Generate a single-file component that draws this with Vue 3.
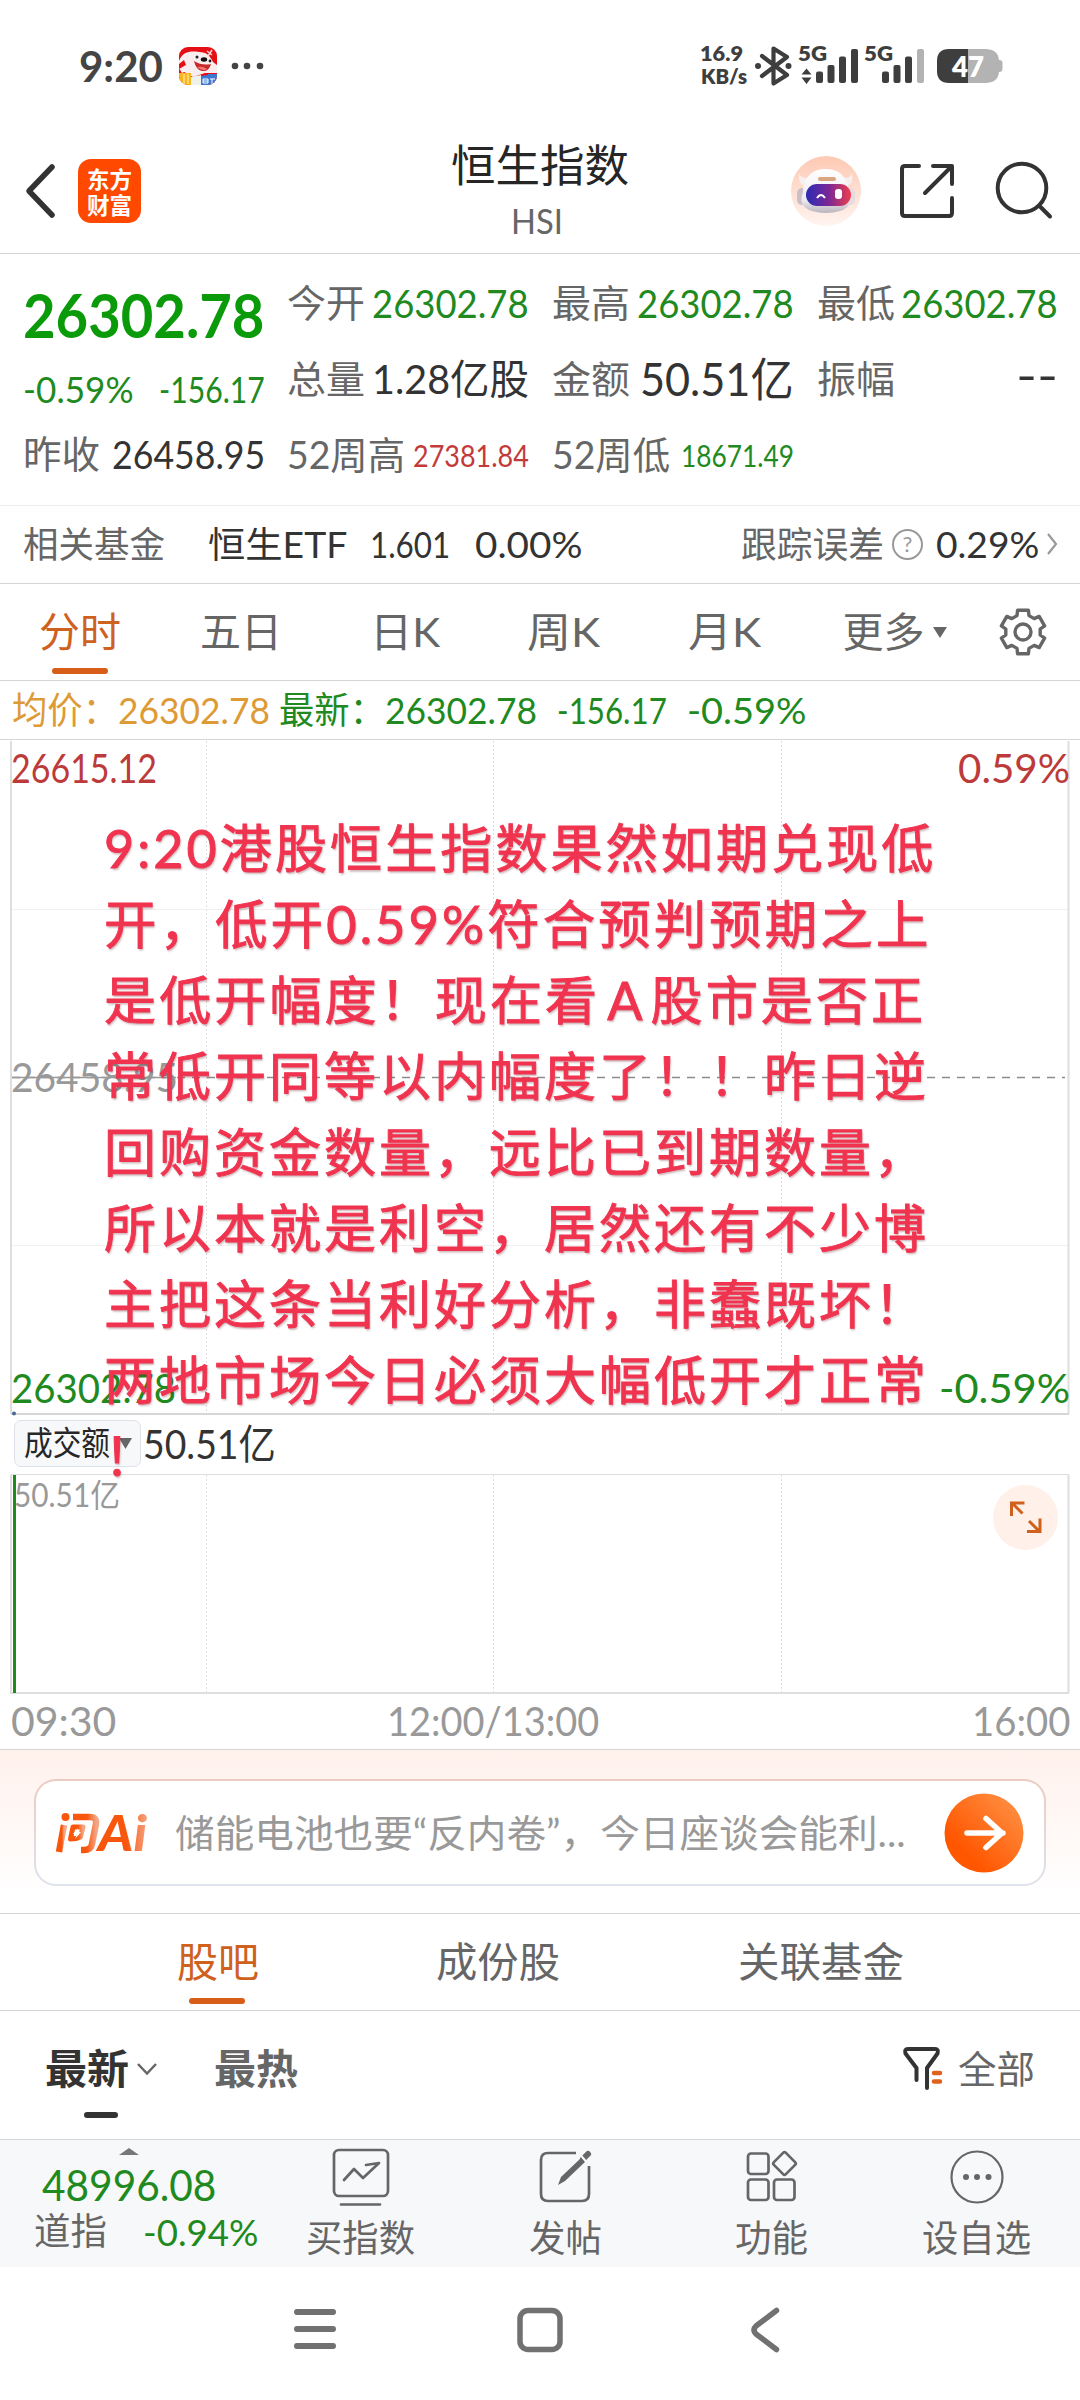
<script setup>
// Scales a text run horizontally so that it fills the given width in pixels.
const vFit = {
  mounted(el, { value }) {
    const natural = el.offsetWidth
    if (!natural) return
    el.style.transform = `scaleX(${value / natural})`
    el.style.marginRight = `${value - natural}px`
  },
}

const columns = [
  [
    { label: '今开', value: '26302.78', lw: 78, vw: 157, cls: 'green s39' },
    { label: '总量', value: '1.28亿股', lw: 78, vw: 157, cls: 'ink s41 han' },
    { label: '52周高', value: '27381.84', lw: 118, vw: 116, cls: 'red s30' },
  ],
  [
    { label: '最高', value: '26302.78', lw: 78, vw: 157, cls: 'green s39' },
    { label: '金额', value: '50.51亿', lw: 78, vw: 154, cls: 'ink s46 han' },
    { label: '52周低', value: '18671.49', lw: 118, vw: 113, cls: 'green s30' },
  ],
  [
    { label: '最低', value: '26302.78', lw: 78, vw: 157, cls: 'green s39' },
    { label: '振幅', value: '--', lw: 78, vw: 42, cls: 'ink s46 dash' },
  ],
]

const note = [
  { t: ['9:20港股恒生指数果然如期兑现低'], w: 832 },
  { t: ['开，低开0.59%符合预判预期之上'], w: 827 },
  { t: ['是低开幅度！现在看', 'A', '股市是否正'], w: 822 },
  { t: ['常低开同等以内幅度了！！昨日逆'], w: 825 },
  { t: ['回购资金数量，远比已到期数量，'], w: 825 },
  { t: ['所以本就是利空，居然还有不少博'], w: 825 },
  { t: ['主把这条当利好分析，非蠢既坏！'], w: 825 },
  { t: ['两地市场今日必须大幅低开才正常'], w: 825 },
  { t: ['！'], w: 55 },
]

const gear = Array.from({ length: 6 }, (_, i) => i * 60)
  .flatMap((a) => [[a - 20, 17.5], [a - 14, 22.5], [a + 14, 22.5], [a + 20, 17.5]])
  .map(([a, r]) => {
    const rad = (a * Math.PI) / 180
    return `${(25 + r * Math.sin(rad)).toFixed(1)},${(25 - r * Math.cos(rad)).toFixed(1)}`
  })
  .join(' ')
</script>

<template>
  <div class="screen">
    <header class="status">
      <span v-fit="84" class="clock">9:20</span>
      <svg class="dog" width="38" height="38" viewBox="0 0 38 38">
        <defs><clipPath id="dogClip"><rect width="38" height="38" rx="9" /></clipPath></defs>
        <g clip-path="url(#dogClip)">
          <rect width="38" height="38" fill="#e60f16" />
          <path d="M0 14C4 4 12 4 20 5c8 0 11 4 14 10l4 3v8H26L14 30 0 22l7-4-2-5-5 4z" fill="#f8eeee" />
          <path d="M28 4l5 4M33 3l-4 6" stroke="#ffd5d0" stroke-width="1.5" />
          <path d="M1 23l6 1-4 2z" fill="#fff" />
          <circle cx="18" cy="10" r="1.5" fill="#222" /><circle cx="31" cy="14" r="1.4" fill="#222" />
          <ellipse cx="25" cy="12.5" rx="3.2" ry="2.2" fill="#111" />
          <path d="M15 14q8 5 17 3-2 8-9 7-6-1-8-10z" fill="#c82a2c" />
          <path d="M18 20q6-1 10 2-4 3-10-2z" fill="#f4777a" />
          <path d="M0 26h12v12H0z" fill="#f8b51c" /><path d="M5 27v10M9 27v10" stroke="#ffe08a" stroke-width="1.5" />
          <path d="M12 30l10-2v10H12z" fill="#eef2ea" />
          <path d="M22 29l7-1v-1h9v11H22z" fill="#3c78d2" />
          <path d="M24 32h5v4h-5zM31 32h5M33 32v5M24 34h5" stroke="#fff" fill="none" />
        </g>
      </svg>
      <svg class="more" width="34" height="8" viewBox="0 0 34 8"><g fill="#444"><circle cx="4" cy="4" r="3.3" /><circle cx="16" cy="4" r="3.3" /><circle cx="29" cy="4" r="3.3" /></g></svg>
      <svg class="sys" width="310" height="50" viewBox="695 40 310 50" fill="#3e3e3e">
        <g font-weight="800" font-size="21.5">
          <text x="700" y="59.5" textLength="43" lengthAdjust="spacingAndGlyphs">16.9</text>
          <text x="701" y="82.5" font-size="20" textLength="46" lengthAdjust="spacingAndGlyphs">KB/s</text>
          <text x="798" y="59.5" textLength="29" lengthAdjust="spacingAndGlyphs">5G</text>
          <text x="864" y="59.5" textLength="29" lengthAdjust="spacingAndGlyphs">5G</text>
        </g>
        <path d="M762 55l25 19-13.500 8.500V47.500L787 56l-25 19" fill="none" stroke="#3e3e3e" stroke-width="4.200" stroke-linejoin="round" stroke-linecap="round" />
        <circle cx="758" cy="65" r="3" /><circle cx="788.500" cy="65" r="3" />
        <path d="M806.500 67.500l5 6h-10zM806.500 83l5-6.500h-10z" />
        <rect x="816" y="70.500" width="7" height="11.500" rx="2" /><rect x="827.500" y="64" width="7" height="18" rx="2" /><rect x="839" y="55.500" width="7" height="26.500" rx="2" /><rect x="851" y="48" width="7" height="34" rx="2" />
        <rect x="882" y="70.500" width="7" height="11.500" rx="2" /><rect x="893.500" y="64" width="7" height="18" rx="2" /><rect x="905" y="55.500" width="7" height="26.500" rx="2" /><rect x="917" y="48" width="7" height="34" rx="2" fill="#b3b3b3" />
        <path d="M968 48h17q13 0 14 11 3.500 0 3.500 3v6q0 3-3.500 3-1 11-14 11h-17z" fill="#b3b3b3" />
        <path d="M968 48h-19q-12 0-12 12v10q0 12 12 12h19z" />
        <text x="952" y="75.500" font-size="28" font-weight="800" fill="#fff" textLength="32" lengthAdjust="spacingAndGlyphs">47</text>
      </svg>
    </header>

    <nav class="title-bar">
      <svg class="back" width="34" height="56" viewBox="0 0 34 56"><path d="M29 4L6 28l23 24" fill="none" stroke="#333" stroke-width="5.500" stroke-linecap="round" stroke-linejoin="round" /></svg>
      <div class="logo"><span>东方</span><span>财富</span></div>
      <div class="title"><span v-fit="178" class="name">恒生指数</span><span v-fit="52" class="code">HSI</span></div>
      <svg class="robot" width="70" height="70" viewBox="0 0 70 70">
        <defs>
          <linearGradient id="halo" x2="0" y2="1"><stop stop-color="#fdc9b3" /><stop offset="1" stop-color="#fff4f0" /></linearGradient>
          <linearGradient id="visor"><stop stop-color="#2b2bb4" /><stop offset=".5" stop-color="#7a2796" /><stop offset="1" stop-color="#ee3f4e" /></linearGradient>
          <linearGradient id="helmet" x2="0" y2="1"><stop stop-color="#fff" /><stop offset=".7" stop-color="#eeeaf0" /><stop offset="1" stop-color="#b9b4bd" /></linearGradient>
        </defs>
        <circle cx="35" cy="35" r="35" fill="url(#halo)" />
        <path d="M8 17q3 7 10 4l-5 9q-6-2-5-13zM61 17q-3 7-9 4l4 9q7-2 5-13z" fill="#f7eeee" />
        <rect x="6" y="32" width="10" height="17" rx="5" fill="#c9bfc6" /><rect x="54" y="32" width="10" height="17" rx="5" fill="#e5dce1" />
        <path d="M12 36C13 20 22 13 35 13s22 8 23 23q8 20-23 21Q4 56 12 36z" fill="url(#helmet)" />
        <rect x="27" y="21" width="18" height="4" rx="2" fill="#dba57f" />
        <rect x="15" y="28" width="45" height="22" rx="11" fill="url(#visor)" />
        <path d="M26 42q4-6 8 0" fill="none" stroke="#fff" stroke-width="2" /><rect x="44" y="33" width="7" height="10" rx="3" fill="#fff" />
      </svg>
      <svg class="share" width="58" height="58" viewBox="0 0 58 58" fill="none" stroke="#333" stroke-width="4" stroke-linecap="round" stroke-linejoin="round"><path d="M21 4H7Q4 4 4 7v44q0 3 3 3h44q3 0 3-3V36M35 4h19v18M52 6L27 31" /></svg>
      <svg class="search" width="60" height="60" viewBox="0 0 60 60" fill="none" stroke="#333" stroke-width="4" stroke-linecap="round"><circle cx="27" cy="27" r="24.300" /><path d="M44.500 45L55 55.500" /></svg>
    </nav>

    <section class="quote">
      <div class="main">
        <div class="price"><span v-fit="241" class="green">26302.78</span></div>
        <div class="change green"><span v-fit="111">-0.59%</span><span v-fit="106">-156.17</span></div>
        <div class="cell"><span v-fit="77" class="label">昨收</span><span v-fit="153" class="ink s38">26458.95</span></div>
      </div>
      <div v-for="(col, i) in columns" :key="i" class="col">
        <div v-for="c in col" :key="c.label" class="cell">
          <span v-fit="c.lw" class="label">{{ c.label }}</span><span v-fit="c.vw" :class="c.cls">{{ c.value }}</span>
        </div>
      </div>
    </section>

    <section class="fund">
      <span v-fit="142" class="label">相关基金</span>
      <span v-fit="139" class="etf">恒生ETF</span>
      <span v-fit="80" class="f1">1.601</span>
      <span v-fit="107" class="f2">0.00%</span>
      <span v-fit="143" class="label f3">跟踪误差</span>
      <svg width="33" height="33" viewBox="0 0 33 33"><circle cx="16.500" cy="16.500" r="14.500" fill="none" stroke="#999" stroke-width="2" /><text x="16.500" y="24" font-size="22" text-anchor="middle" fill="#999">?</text></svg>
      <span v-fit="103" class="f4">0.29%</span>
      <svg class="arr" width="12" height="24" viewBox="0 0 12 24"><path d="M2 2l8 10-8 10" fill="none" stroke="#999" stroke-width="2.200" /></svg>
    </section>

    <nav class="tabs">
      <span v-fit="82" class="active">分时</span>
      <span v-fit="82" class="t2">五日</span>
      <span v-fit="70" class="t3">日K</span>
      <span v-fit="73" class="t4">周K</span>
      <span v-fit="73" class="t5">月K</span>
      <span v-fit="82" class="t6">更多</span>
      <svg class="tri" width="14" height="11" viewBox="0 0 14 11"><path d="M0 0h14L7 11z" fill="#666" /></svg>
      <svg class="gear" width="50" height="50" viewBox="0 0 50 50" fill="none" stroke="#666" stroke-width="3.400"><polygon :points="gear" stroke-linejoin="round" /><circle cx="25" cy="25" r="8" /></svg>
      <i class="bar"></i>
    </nav>

    <section class="info">
      <span v-fit="106" class="amber han">均价：</span><span v-fit="152" class="amber">26302.78</span>
      <span v-fit="106" class="green i3 han">最新：</span><span v-fit="152" class="green">26302.78</span>
      <span v-fit="110" class="green i5">-156.17</span><span v-fit="120" class="green i6">-0.59%</span>
    </section>

    <section class="chart">
      <svg width="1080" height="676" viewBox="0 739 1080 676">
        <g stroke="#dedede" fill="none">
          <path d="M206.500 740v673M493.500 740v673M781.500 740v673" stroke-dasharray="2 2" />
          <path d="M12 908.500h1056M12 1244.500h1056" stroke="#f0f0f0" />
          <path d="M11 740v673M1068.500 740v673" stroke-width="2" />
        </g>
        <path d="M12 1076.500h1053" stroke="#8c8c8c" stroke-width="1.500" stroke-dasharray="8 7" />
        <path d="M11 1413h1058" stroke="#d6d6d6" stroke-width="2" /><circle cx="14" cy="1412.500" r="2" fill="#4a6a96" />
        <g font-size="41">
          <text x="11" y="781.500" fill="#bd3a3a" textLength="146" lengthAdjust="spacingAndGlyphs">26615.12</text>
          <text x="958" y="781.500" fill="#bd3a3a" textLength="112" lengthAdjust="spacingAndGlyphs">0.59%</text>
          <text x="11" y="1091" fill="#999" textLength="167" lengthAdjust="spacingAndGlyphs">26458.95</text>
          <text x="11" y="1401.500" fill="#208a20" textLength="165" lengthAdjust="spacingAndGlyphs">26302.78</text>
          <text x="939" y="1401.500" fill="#208a20" textLength="131" lengthAdjust="spacingAndGlyphs">-0.59%</text>
        </g>
        <path d="M12 1076.500h164" stroke="#999" stroke-width="1.500" />
      </svg>
      <div class="note">
        <div v-for="(l, i) in note" :key="i"><span v-fit="l.w"><b v-for="(p, j) in l.t" :key="j" :class="{ letter: j === 1 }">{{ p }}</b></span></div>
      </div>
    </section>

    <section class="turnover">
      <div class="pill"><span v-fit="86">成交额</span><svg width="13" height="11" viewBox="0 0 13 11"><path d="M0 0h13L6.500 11z" fill="#666" /></svg></div>
      <span v-fit="133" class="amount">50.51亿</span>
    </section>

    <section class="volume">
      <svg width="1080" height="221" viewBox="0 1474 1080 221">
        <g stroke="#dedede" fill="none">
          <path d="M206.500 1475v218M493.500 1475v218M781.500 1475v218" stroke-dasharray="2 2" />
          <path d="M11 1474.500h1058" /><path d="M11 1475v218M1068.500 1475v218M10 1693h1059" stroke-width="2" />
        </g>
        <path d="M14.500 1475v218" stroke="#208a20" stroke-width="3" />
        <text x="14" y="1507" font-size="32" fill="#999" textLength="106" lengthAdjust="spacingAndGlyphs">50.51亿</text>
        <circle cx="1025.500" cy="1517.500" r="32.500" fill="#fff1e9" />
        <path d="M1022.500 1513.500l-11-11M1011.500 1516v-13h13M1029 1521l11 11M1027 1531.500h13v-13" fill="none" stroke="#d0601c" stroke-width="3" />
      </svg>
    </section>

    <div class="times"><span v-fit="105">09:30</span><span v-fit="212">12:00/13:00</span><span v-fit="98">16:00</span></div>

    <section class="ask">
      <div class="ask-box">
        <svg class="ask-logo" width="94" height="44" viewBox="0 0 94 44">
          <defs><linearGradient id="askFill"><stop offset=".6" stop-color="#f9560d" /><stop offset="1" stop-color="#f5a583" /></linearGradient></defs>
          <g fill="none" stroke="url(#askFill)" stroke-width="6.500" stroke-linejoin="round" stroke-linecap="butt">
            <path d="M9 14L4 41" /><path d="M18 6h17q7 0 6 7l-4 20q-1 6-8 6h-3" />
            <path d="M18 16h10l-2.500 10q-4 2-10 2z" stroke-width="5" />
          </g>
          <circle cx="10.500" cy="6" r="4" fill="#f9560d" /><path d="M23 17l-5 6h4l-2 5 6-7h-4z" fill="#fff" />
          <text x="43" y="39.500" font-size="49" font-style="italic" font-weight="900" fill="url(#askFill)" textLength="49" lengthAdjust="spacingAndGlyphs">Ai</text>
        </svg>
        <span v-fit="731" class="ph">储能电池也要“反内卷”，今日座谈会能利...</span>
        <svg class="go" width="80" height="80" viewBox="0 0 80 80">
          <defs><linearGradient id="goFill" x1=".25" y1=".75" x2=".85" y2=".15"><stop stop-color="#ff5600" /><stop offset="1" stop-color="#ff8a3c" /></linearGradient></defs>
          <circle cx="40" cy="40" r="39.500" fill="url(#goFill)" />
          <path d="M23 40h36M42 25.500L58 40 42 54.500" fill="none" stroke="#fff" stroke-width="5.500" stroke-linecap="round" stroke-linejoin="round" />
        </svg>
      </div>
    </section>

    <nav class="tabs lower">
      <span v-fit="82" class="active">股吧</span><span v-fit="124" class="l2">成份股</span><span v-fit="166" class="l3">关联基金</span>
      <i class="bar"></i>
    </nav>

    <section class="sort">
      <span v-fit="84" class="newest han">最新</span>
      <svg class="chev" width="22" height="14" viewBox="0 0 22 14"><path d="M2 2l9 9.500L20 2" fill="none" stroke="#666" stroke-width="2.500" /></svg>
      <span v-fit="84" class="hot han">最热</span>
      <svg class="funnel" width="42" height="46" viewBox="0 0 42 46" fill="none" stroke-linecap="round" stroke-linejoin="round"><path d="M14.500 34V22L3.500 7.500Q2 3 6 3h27q4 0 2.500 4.500L25 22v20" stroke="#333" stroke-width="4" /><path d="M32 27h6M32 35.500h6" stroke="#e0621f" stroke-width="4.500" /></svg>
      <span v-fit="77" class="all han">全部</span>
      <i class="bar"></i>
    </section>

    <footer class="dock">
      <div class="index">
        <svg width="20" height="7" viewBox="0 0 20 7"><path d="M0 7L10 0l10 7z" fill="#777" /></svg>
        <div class="ix green"><span v-fit="174">48996.08</span></div>
        <div class="ix2"><span v-fit="73" class="label">道指</span><span v-fit="116" class="green">-0.94%</span></div>
      </div>
      <div class="item">
        <svg width="60" height="60" viewBox="0 0 60 60" fill="none" stroke="#666" stroke-width="2.700" stroke-linecap="round" stroke-linejoin="round"><rect x="3" y="4" width="54" height="46" rx="5" /><path d="M10 58.500h39M13 34l10-11 9 9 16-15-13 2" /></svg>
        <span v-fit="109">买指数</span>
      </div>
      <div class="item">
        <svg width="60" height="60" viewBox="0 0 60 60" fill="none" stroke="#666" stroke-width="2.700"><path d="M40 7H12q-7 0-7 7v34q0 7 7 7h34q7 0 7-7V20" /><path d="M22 39l3-8 20-19 4 4-20 19z" fill="#666" stroke="none" /><path d="M47 13l5-5" stroke-width="6" stroke-linecap="round" /><path d="M44.500 9l6 7" stroke="#f7f8fa" stroke-width="2" /></svg>
        <span v-fit="73">发帖</span>
      </div>
      <div class="item">
        <svg width="60" height="60" viewBox="0 0 60 60" fill="none" stroke="#666" stroke-width="2.700"><rect x="7" y="7.500" width="20.500" height="20.500" rx="3" /><rect x="7" y="33.500" width="20.500" height="20.500" rx="3" /><rect x="33" y="33.500" width="20.500" height="20.500" rx="3" /><rect x="35" y="9" width="17" height="17" rx="2" transform="rotate(45 43.500 17.500)" /></svg>
        <span v-fit="73">功能</span>
      </div>
      <div class="item">
        <svg width="60" height="60" viewBox="0 0 60 60"><circle cx="30" cy="31" r="25.500" fill="none" stroke="#666" stroke-width="2.200" /><g fill="#666"><circle cx="19" cy="31" r="3" /><circle cx="30" cy="31" r="3" /><circle cx="41.500" cy="31" r="3" /></g></svg>
        <span v-fit="109">设自选</span>
      </div>
    </footer>

    <nav class="system">
      <svg width="42" height="42" viewBox="0 0 42 42"><path d="M3 4h36M3 21h36M3 38h36" stroke="#717171" stroke-width="6" stroke-linecap="round" /></svg>
      <svg width="46" height="46" viewBox="0 0 46 46"><rect x="3" y="3.500" width="40" height="39" rx="8" fill="none" stroke="#717171" stroke-width="5.500" /></svg>
      <svg width="30" height="46" viewBox="0 0 30 46"><path d="M25.500 3.500L5 19q-4 4 0 8l20.500 15.500" fill="none" stroke="#717171" stroke-width="5.500" stroke-linecap="round" stroke-linejoin="round" /></svg>
    </nav>
  </div>
</template>

<style>
body { background: #fff; }
</style>

<style scoped>
.screen { width: 1080px; height: 2400px; overflow: hidden; background: #fff; font-family: Lato, "Noto Sans CJK SC", sans-serif; color: #333; box-sizing: border-box; display: flex; flex-direction: column; }
.screen * { box-sizing: border-box; }
.screen > * { flex: none; }
span { display: inline-block; white-space: nowrap; transform-origin: 0 50%; flex: none; }
svg { display: block; flex: none; }
.green { color: #208a20; }
.red { color: #c23a3a; }
.ink { color: #333; }
.amber { color: #dd9a35; }
.label { color: #666; font-size: 38px; padding-bottom: 5px; }
.han { padding-bottom: 6px; }
.dash { padding-bottom: 10px; }
.s30 { font-size: 30px; }
.s38 { font-size: 38px; }
.s39 { font-size: 39px; }
.s41 { font-size: 41px; }
.s46 { font-size: 46px; }

.status { height: 131px; padding-left: 79px; display: flex; align-items: center; }
.clock { font-size: 42.500px; font-weight: 700; color: #444; padding-bottom: 1px; }
.dog { margin-left: 16px; }
.more { margin-left: 14px; }
.sys { margin-left: 430px; }

.title-bar { height: 123px; padding: 0 0 3px 23px; display: flex; align-items: center; border-bottom: 1px solid #d5d5d5; }
.logo { width: 63px; height: 64px; margin-left: 21px; border-radius: 13px; background: #ff4800; color: #fff; font-family: "Noto Sans CJK SC", sans-serif; font-size: 22.500px; font-weight: 700; line-height: 26px; display: flex; flex-direction: column; align-items: center; justify-content: center; }
.title { width: 240px; margin-left: 276px; display: flex; flex-direction: column; align-items: center; margin-top: 1px; }
.title .name { margin-left: 6px; font-size: 44px; line-height: 60px; color: #262626; }
.title .code { font-size: 34px; line-height: 52px; color: #666; }
.robot { margin-left: 134px; }
.share { margin-left: 37px; }
.search { margin-left: 39px; }

.quote { height: 252px; padding: 11px 22px 0 23px; display: flex; border-bottom: 1px solid #ececec; }
.main { width: 242px; margin-right: 22px; }
.price { height: 97px; display: flex; align-items: center; font-size: 62px; font-weight: 700; }
.price .green { color: #0a9a0a; }
.change { height: 54px; padding-bottom: 1px; display: flex; align-items: center; justify-content: space-between; font-size: 37px; }
.col { width: 242px; margin-right: 23px; }
.col:last-child { width: 241px; margin-right: 0; }
.cell { height: 76px; display: flex; align-items: center; justify-content: space-between; }

.fund { height: 78px; padding-left: 23px; display: flex; align-items: center; font-size: 36.500px; border-bottom: 1px solid #d5d5d5; padding-bottom: 1px; }
.fund .label { font-size: 36px; }
.etf { margin-left: 43px; padding-bottom: 3px; }
.f1 { margin-left: 23px; }
.f2 { margin-left: 24px; }
.f3 { margin-left: 159px; }
.fund svg { margin-left: 7px; }
.f4 { margin-left: 12px; }
.fund .arr { margin-left: 7px; }

.tabs { height: 97px; padding-left: 39px; position: relative; display: flex; align-items: center; font-size: 41px; color: #666; border-bottom: 1px solid #d5d5d5; }
.tabs span { padding-bottom: 6px; }
.tabs .active { color: #cf611f; }
.bar { position: absolute; left: 52px; bottom: 6px; width: 56px; height: 6px; border-radius: 3px; background: #d85d18; }
.t2 { margin-left: 79px; }
.t3 { margin-left: 88px; }
.t4 { margin-left: 87px; }
.t5 { margin-left: 88px; }
.t6 { margin-left: 81px; }
.tri { margin-left: 8px; }
.gear { margin-left: 51px; }

.info { height: 59px; padding: 0 0 1px 12px; display: flex; align-items: center; font-size: 37px; border-bottom: 1px solid #d5d5d5; }
.info .han { padding-bottom: 3px; }
.i3 { margin-left: 9px; }
.i5 { margin-left: 20px; }
.i6 { margin-left: 20px; }

.chart { height: 675px; position: relative; }
.note { position: absolute; left: 104px; top: 70px; z-index: 2; font-size: 52px; letter-spacing: 3px; line-height: 76px; color: #f0334f; -webkit-text-stroke: 0.9px #f0334f; text-shadow: 1px 2px 2px rgba(90, 20, 30, .3); }
.note div { height: 76px; }
.note b { font-weight: 400; }
.note .letter { margin: 0 5px 0 7px; }

.turnover { height: 59px; padding: 0 0 2px 14px; display: flex; align-items: center; }
.pill { width: 127px; height: 47px; padding-left: 9px; border: 1px solid #dfe2e8; border-radius: 7px; background: #f7f8fa; display: flex; align-items: center; gap: 9px; font-size: 33px; color: #262626; }
.pill span { padding-bottom: 5px; }
.amount { margin-left: 2px; padding-bottom: 5px; font-size: 41px; }

.volume { height: 221px; }
.times { height: 55px; padding: 0 11px 3px; display: flex; align-items: center; font-size: 41px; color: #999; border-bottom: 1px solid #d5d5d5; }
.times span:nth-child(2) { margin-left: 271px; }
.times span:nth-child(3) { margin-left: 372px; }

.ask { height: 164px; padding: 29px 34px 0; background: linear-gradient(#fff1ec, #fff 90%); border-bottom: 1px solid #d5d5d5; }
.ask-box { height: 107px; border: 2px solid transparent; border-radius: 22px; background: linear-gradient(#fff, #fff) padding-box, linear-gradient(#ebcbc1, #dfe3ec) border-box; display: flex; align-items: center; padding-left: 19px; }
.ph { margin-left: 26px; font-size: 38px; color: #999; padding-bottom: 5px; }
.go { margin-left: 38px; }

.lower { padding-left: 177px; }
.lower .bar { left: 189px; bottom: 6px; }
.l2 { margin-left: 177px; }
.l3 { margin-left: 178px; }

.sort { height: 129px; padding: 0 0 12px 45px; position: relative; display: flex; align-items: center; border-bottom: 1px solid #d5d5d5; font-size: 41px; }
.newest, .hot { font-weight: 700; }
.hot { color: #666; margin-left: 56px; }
.chev { margin-left: 7px; }
.funnel { margin-left: 604px; }
.all { margin-left: 14px; font-size: 38px; color: #666; }
.sort .bar { left: 84px; bottom: 21px; width: 34px; background: #333; }

.dock { height: 127px; display: flex; background: #f7f8fa; }
.index { width: 258px; padding: 8px 0 0 34px; }
.index svg { margin-left: 85px; }
.ix { height: 60px; padding-left: 8px; display: flex; align-items: center; font-size: 42px; }
.ix2 { height: 32px; display: flex; align-items: center; justify-content: space-between; width: 225px; font-size: 37px; }
.ix2 .label { font-size: 37px; }
.item { width: 205.300px; display: flex; flex-direction: column; align-items: center; padding-top: 6px; font-size: 37px; color: #666; }
.item span { line-height: 44px; margin-top: 10px; }

.system { flex: 1; display: flex; align-items: flex-start; padding: 41px 0 0 294px; }
.system svg:nth-child(2) { margin: -1px 0 0 181px; }
.system svg:nth-child(3) { margin: -1px 0 0 188px; }
</style>
